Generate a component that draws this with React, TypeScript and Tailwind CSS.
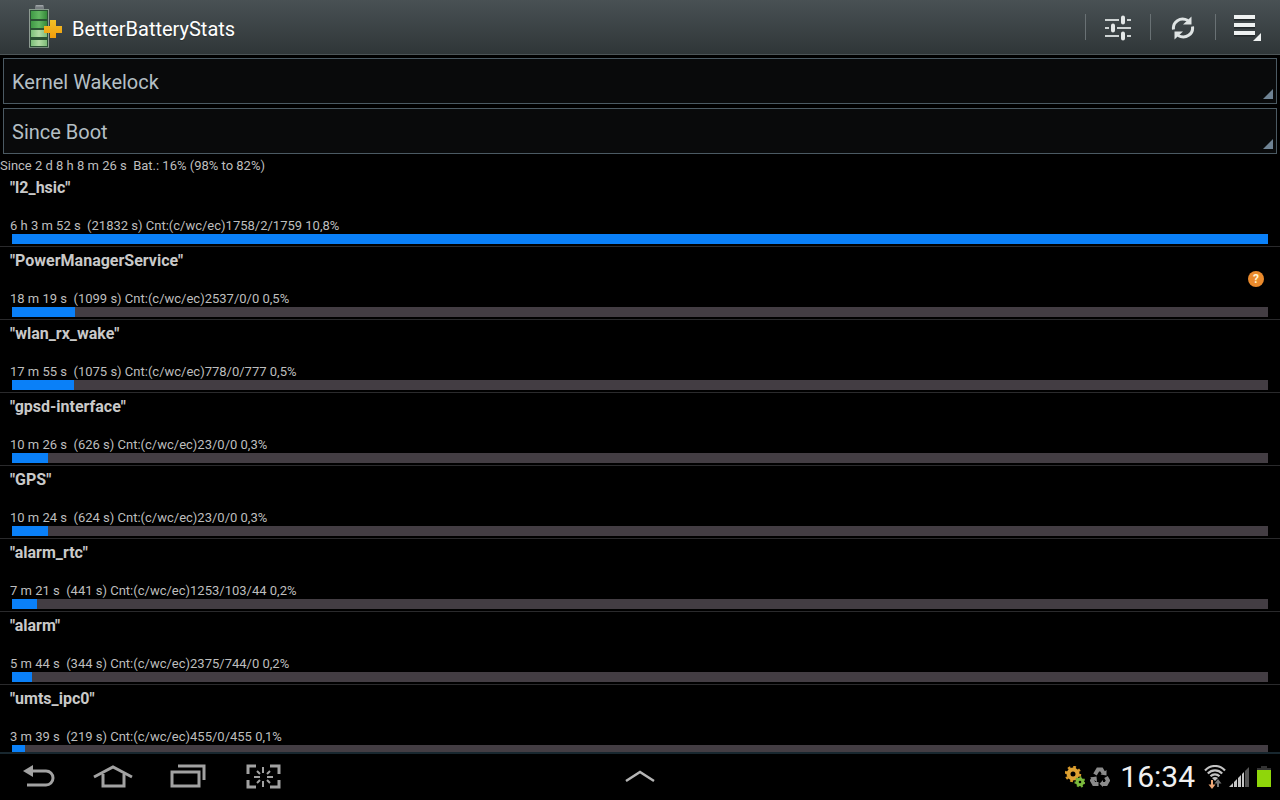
import { useState } from "react";

const STAT_TYPES = ["Kernel Wakelock", "Partial Wakelock", "Process", "Alarm", "Network"];
const PERIODS = ["Since Boot", "Since Unplugged", "Since Charged"];

const wakelocks = [
  { name: "l2_hsic", time: "6 h 3 m 52 s", seconds: 21832, counts: "1758/2/1759", share: "10,8%", help: false },
  { name: "PowerManagerService", time: "18 m 19 s", seconds: 1099, counts: "2537/0/0", share: "0,5%", help: true },
  { name: "wlan_rx_wake", time: "17 m 55 s", seconds: 1075, counts: "778/0/777", share: "0,5%", help: false },
  { name: "gpsd-interface", time: "10 m 26 s", seconds: 626, counts: "23/0/0", share: "0,3%", help: false },
  { name: "GPS", time: "10 m 24 s", seconds: 624, counts: "23/0/0", share: "0,3%", help: false },
  { name: "alarm_rtc", time: "7 m 21 s", seconds: 441, counts: "1253/103/44", share: "0,2%", help: false },
  { name: "alarm", time: "5 m 44 s", seconds: 344, counts: "2375/744/0", share: "0,2%", help: false },
  { name: "umts_ipc0", time: "3 m 39 s", seconds: 219, counts: "455/0/455", share: "0,1%", help: false },
];

const maxSeconds = Math.max(...wakelocks.map((w) => w.seconds));

function AppIcon() {
  return (
    <svg width="36" height="48" viewBox="0 0 36 48" aria-hidden="true">
      <defs>
        <linearGradient id="cell" x1="0" x2="1">
          <stop offset="0" stopColor="#3f9a45" />
          <stop offset="0.5" stopColor="#63b862" />
          <stop offset="1" stopColor="#358a3a" />
        </linearGradient>
        <linearGradient id="cellLight" x1="0" x2="1">
          <stop offset="0" stopColor="#7cc07a" />
          <stop offset="0.5" stopColor="#b2dba4" />
          <stop offset="1" stopColor="#7ebb78" />
        </linearGradient>
        <linearGradient id="plus" x1="0" y1="0" x2="0" y2="1">
          <stop offset="0" stopColor="#f2c227" />
          <stop offset="1" stopColor="#f09c0c" />
        </linearGradient>
      </defs>
      <rect x="9" y="2" width="9" height="5" rx="1" fill="#777d81" />
      <rect x="10" y="2" width="7" height="1.5" fill="#9da3a6" />
      <rect x="3" y="6" width="20" height="39" rx="1" fill="#2b5234" />
      <path d="M3.5 6V44M22.5 6V44" stroke="#8d9a92" />
      <path d="M3 6.5H23" stroke="#899c8e" />
      <rect x="5" y="8" width="16" height="8" fill="url(#cell)" />
      <rect x="5" y="18" width="16" height="7" fill="url(#cell)" />
      <rect x="5" y="27" width="16" height="7" fill="url(#cellLight)" />
      <rect x="5" y="37" width="16" height="6" fill="url(#cellLight)" />
      <path d="M3 44.5H23" stroke="#75887b" />
      <path d="M24 17h6v6h6v7h-6v5h-6v-5h-6v-7h6z" fill="url(#plus)" />
    </svg>
  );
}

function SlidersIcon() {
  return (
    <svg width="26" height="26" viewBox="0 0 26 26" aria-hidden="true">
      <path d="M0 5H14M22 5H26M0 13H4M12 13H26M0 21H14M22 21H26" stroke="#ced3d3" strokeWidth="2" />
      <path d="M18 2.500V7.500M8 10.500V15.500M18 18.500V23.500" stroke="#e4e8e8" strokeWidth="4" strokeLinecap="round" />
    </svg>
  );
}

function RefreshIcon() {
  return (
    <svg width="24" height="24" viewBox="0 0 24 24" fill="none" aria-hidden="true">
      <path d="M2.5 13.5C1.5 6 9 0.5 17 4.5M21.5 10.5C22.5 18 15 23.5 7 19.5" stroke="#dfe4e4" strokeWidth="3" />
      <path d="M20.5 0.5V8.5H12zM3.5 23.5V15.5H12z" fill="#dfe4e4" />
    </svg>
  );
}

function MenuIcon() {
  return (
    <svg width="28" height="28" viewBox="0 0 28 28" aria-hidden="true">
      <path d="M0 4.500H21M0 12.500H21M0 20.500H21" stroke="#22282a" strokeWidth="4" />
      <path d="M0 3H21M0 11H21M0 19H21" stroke="#eef1f1" strokeWidth="4" />
      <path d="M27 19V27H19z" fill="#eef1f1" />
    </svg>
  );
}

function Spinner({ label, options }: { label: string; options: string[] }) {
  const [value, setValue] = useState(options[0]);
  return (
    <div className="relative">
      <select
        aria-label={label}
        value={value}
        onChange={(e) => setValue(e.target.value)}
        className="block h-[46px] w-full appearance-none border border-[#4b5a63] bg-[#090a0b] px-2 pt-[2px] text-xl text-[#b4bfc4]"
      >
        {options.map((o) => (
          <option key={o}>{o}</option>
        ))}
      </select>
      <svg width="10" height="10" viewBox="0 0 10 10" className="pointer-events-none absolute right-1 bottom-[5px]" aria-hidden="true">
        <path d="M10 0V10H0z" fill="#6f8394" />
      </svg>
    </div>
  );
}

function WakelockRow({ item }: { item: (typeof wakelocks)[number] }) {
  return (
    <li className="h-[73px] shrink-0 border-b border-[#2a2a2c] pt-1">
      <div className="flex h-14 items-center justify-between pr-4 pl-[10px]">
        <div>
          <h2 className="h-[38px] text-base leading-5 font-bold text-[#c9c9c9]">"{item.name}"</h2>
          <p className="h-[18px] text-[13px] leading-5 whitespace-pre text-[#bebebe]">
            {item.time}  ({item.seconds} s) Cnt:(c/wc/ec){item.counts} {item.share}
          </p>
        </div>
        {item.help && (
          <button
            aria-label="Help"
            className="flex size-4 items-center justify-center rounded-full bg-[#ea8a2c] text-xs leading-4 font-bold text-[#fff3d0]"
          >
            ?
          </button>
        )}
      </div>
      <div className="mx-3 h-[10px] bg-[#433d43]">
        <div className="h-full bg-[#0a80f8]" style={{ width: `${(item.seconds / maxSeconds) * 100}%` }} />
      </div>
    </li>
  );
}

function BackIcon() {
  return (
    <svg width="40" height="26" viewBox="0 0 40 26" fill="none" aria-hidden="true">
      <path d="M12 7H28A7 7 0 0 1 28 21H9" stroke="#a2a2a2" strokeWidth="3" />
      <path d="M5 7L15 1V13z" fill="#a2a2a2" />
    </svg>
  );
}

function HomeIcon() {
  return (
    <svg width="40" height="26" viewBox="0 0 40 26" fill="none" stroke="#a2a2a2" strokeWidth="3" aria-hidden="true">
      <path d="M1 13L20 3L39 13" />
      <path d="M10 10V22H31V10" />
    </svg>
  );
}

function RecentIcon() {
  return (
    <svg width="40" height="26" viewBox="0 0 40 26" fill="none" stroke="#a2a2a2" strokeWidth="3" aria-hidden="true">
      <rect x="4" y="8" width="27" height="14" />
      <path d="M10 2H36V16" />
    </svg>
  );
}

function CaptureIcon() {
  return (
    <svg width="40" height="26" viewBox="0 0 40 26" fill="none" stroke="#a2a2a2" aria-hidden="true">
      <path d="M5 10V2H13M27 2H36V10M36 16V23H27M13 23H5V16" strokeWidth="3" />
      <path
        d="M20 3V9M20 17V23M11 13H17M24 13H30M14 7L17 10M27 7L24 10M14 19L17 16M27 19L24 16"
        strokeWidth="2"
      />
    </svg>
  );
}

function GearsIcon() {
  return (
    <svg width="20" height="22" viewBox="0 0 20 22" fill="none" aria-hidden="true">
      <circle cx="8" cy="8" r="7" stroke="#d99a2a" strokeWidth="2.5" strokeDasharray="2.7 2.798" />
      <circle cx="8" cy="8" r="4.5" stroke="#dda133" strokeWidth="4" />
      <circle cx="15" cy="16" r="4.5" stroke="#6fae35" strokeWidth="2" strokeDasharray="2 2.039" />
      <circle cx="15" cy="16" r="2.8" stroke="#7cba3d" strokeWidth="3" />
    </svg>
  );
}

function RecycleIcon() {
  return (
    <svg width="20" height="20" viewBox="0 0 20 20" fill="none" aria-hidden="true">
      <path d="M5 7.5L8 2.5H11.5L13.5 6" stroke="#8b8b8b" strokeWidth="4" />
      <path d="M16 10L18 13.5L16 17H12.5" stroke="#8b8b8b" strokeWidth="4" />
      <path d="M8.5 17H4L2 13.5L3.5 11" stroke="#8b8b8b" strokeWidth="4" />
      <path d="M10.5 7.5L16.5 8.500V3zM13 13V20L9.5 16.8zM0 10.5L6.5 9.5L7 15z" fill="#8b8b8b" />
    </svg>
  );
}

function WifiIcon() {
  return (
    <svg width="24" height="24" viewBox="0 0 24 24" fill="none" aria-hidden="true">
      <path
        d="M2 5.5C7.5 -0.5 16.5 -0.5 22 5.5M4.8 8.5C9 4.3 15 4.3 19.2 8.5M7.5 11.2C10 8.7 14 8.7 16.5 11.2"
        stroke="#c4c4c4"
        strokeWidth="2.2"
      />
      <path d="M9 13Q12 11 15 13L12 16z" fill="#c4c4c4" />
      <path d="M9 15V21" stroke="#efa877" strokeWidth="2" />
      <path d="M5.5 19.5H12.5L9 24z" fill="#efa877" />
      <path d="M15 17V22" stroke="#777" strokeWidth="2" />
      <path d="M11.5 18.5H18.5L15 14z" fill="#777" />
    </svg>
  );
}

function SignalIcon() {
  return (
    <svg width="20" height="20" viewBox="0 0 20 20" aria-hidden="true">
      <path d="M0 20L4 16V20zM5 15L8 12V20H5zM9 11L12 8V20H9zM13 7L15 5V20H13z" fill="#c6c6c6" />
      <path d="M16 4L20 0V20H16z" fill="#555" />
    </svg>
  );
}

function BatteryIcon() {
  return (
    <svg width="14" height="22" viewBox="0 0 14 22" aria-hidden="true">
      <path d="M4 0H10V2H14V5H0V2H4z" fill="#333" />
      <rect y="4" width="14" height="17" fill="#8fd60a" />
    </svg>
  );
}

const actionClass = "flex h-full w-16 items-center justify-center pt-px";

export default function App() {
  return (
    <div className="flex h-screen flex-col overflow-hidden bg-black font-[Roboto,sans-serif]">
      <header className="flex h-[55px] shrink-0 items-center border-b border-[#4d5557] bg-linear-to-b from-[#495154] to-[#2f3638] pl-[26px]">
        <AppIcon />
        <h1 className="ml-[10px] pt-1 text-xl text-white text-shadow-xs">BetterBatteryStats</h1>
        <div className="ml-auto flex h-full items-center">
          <div className="h-[26px] w-px bg-[#697174]" />
          <button aria-label="Preferences" className={actionClass}>
            <SlidersIcon />
          </button>
          <div className="h-[26px] w-px bg-[#697174]" />
          <button aria-label="Refresh" className={actionClass}>
            <RefreshIcon />
          </button>
          <div className="h-[26px] w-px bg-[#697174]" />
          <button aria-label="More options" className={actionClass}>
            <MenuIcon />
          </button>
        </div>
      </header>

      <main className="flex min-h-0 flex-1 flex-col overflow-hidden">
        <div className="flex flex-col gap-1 px-[3px] pt-[3px]">
          <Spinner label="Statistic" options={STAT_TYPES} />
          <Spinner label="Period" options={PERIODS} />
        </div>
        <p className="h-5 shrink-0 pt-[2px] text-[13px] leading-5 whitespace-pre text-[#bebebe]">
          Since 2 d 8 h 8 m 26 s  Bat.: 16% (98% to 82%)
        </p>
        <ul className="flex flex-col">
          {wakelocks.map((w) => (
            <WakelockRow key={w.name} item={w} />
          ))}
        </ul>
      </main>

      <nav className="grid h-12 shrink-0 grid-cols-[1fr_auto_1fr] items-center border-t-2 border-[#18272f] bg-black">
        <div className="flex items-center">
          <button aria-label="Back" className="flex w-[75px] justify-center">
            <BackIcon />
          </button>
          <button aria-label="Home" className="flex w-[75px] justify-center">
            <HomeIcon />
          </button>
          <button aria-label="Recent apps" className="flex w-[75px] justify-center">
            <RecentIcon />
          </button>
          <button aria-label="Capture screen" className="flex w-[75px] justify-center">
            <CaptureIcon />
          </button>
        </div>
        <button aria-label="Show tray">
          <svg width="30" height="16" viewBox="0 0 30 16" fill="none" aria-hidden="true">
            <path d="M1 12L15 3L29 12" stroke="#b5b5b5" strokeWidth="2.5" />
          </svg>
        </button>
        <div className="flex items-center justify-end pr-[9px]">
          <GearsIcon />
          <span className="ml-[5px]">
            <RecycleIcon />
          </span>
          <time className="ml-[10px] text-3xl leading-9 text-[#f0f0f0]">16:34</time>
          <span className="ml-2">
            <WifiIcon />
          </span>
          <span className="ml-[2px]">
            <SignalIcon />
          </span>
          <span className="ml-2">
            <BatteryIcon />
          </span>
        </div>
      </nav>
    </div>
  );
}
